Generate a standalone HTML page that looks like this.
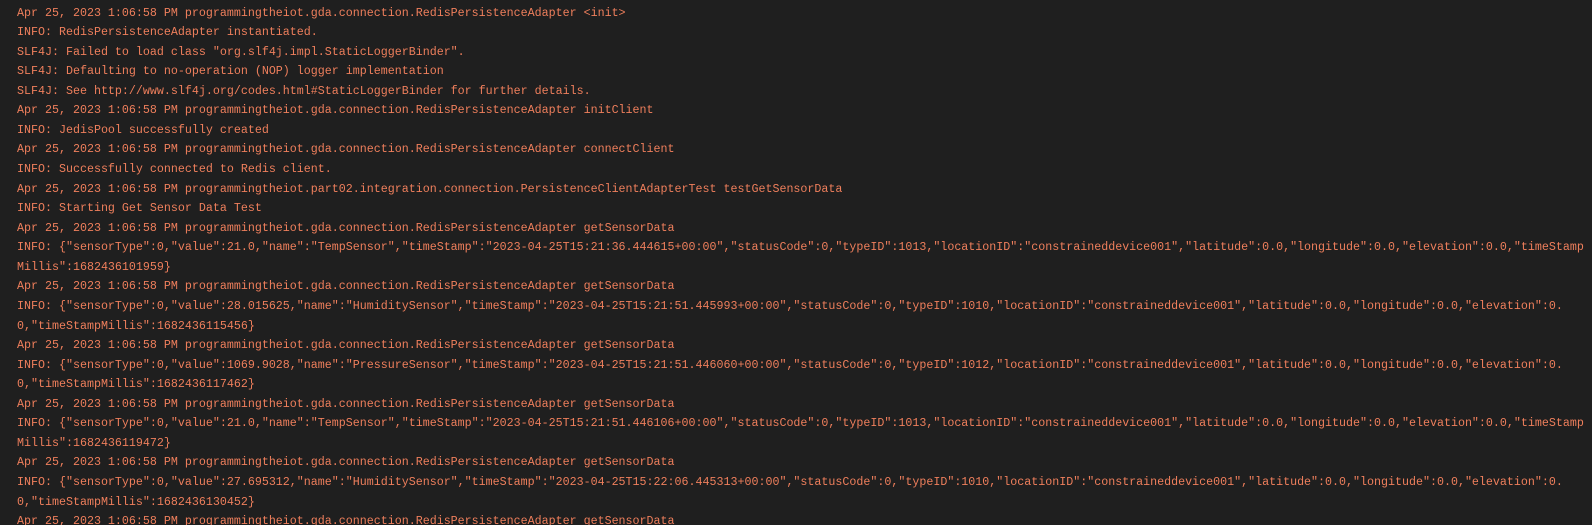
<!DOCTYPE html>
<html><head><meta charset="utf-8"><style>
html,body{margin:0;padding:0;background:#1f1f1f;width:1592px;height:525px;overflow:hidden}
pre{margin:0;padding:3.5px 0 0 17px;font-family:"Liberation Mono","DejaVu Sans Mono",monospace;font-size:11.67px;line-height:19.56px;color:#ef7f5c;white-space:pre}
</style></head><body><pre>Apr 25, 2023 1:06:58 PM programmingtheiot.gda.connection.RedisPersistenceAdapter &lt;init&gt;
INFO: RedisPersistenceAdapter instantiated.
SLF4J: Failed to load class "org.slf4j.impl.StaticLoggerBinder".
SLF4J: Defaulting to no-operation (NOP) logger implementation
SLF4J: See http://www.slf4j.org/codes.html#StaticLoggerBinder for further details.
Apr 25, 2023 1:06:58 PM programmingtheiot.gda.connection.RedisPersistenceAdapter initClient
INFO: JedisPool successfully created
Apr 25, 2023 1:06:58 PM programmingtheiot.gda.connection.RedisPersistenceAdapter connectClient
INFO: Successfully connected to Redis client.
Apr 25, 2023 1:06:58 PM programmingtheiot.part02.integration.connection.PersistenceClientAdapterTest testGetSensorData
INFO: Starting Get Sensor Data Test
Apr 25, 2023 1:06:58 PM programmingtheiot.gda.connection.RedisPersistenceAdapter getSensorData
INFO: {"sensorType":0,"value":21.0,"name":"TempSensor","timeStamp":"2023-04-25T15:21:36.444615+00:00","statusCode":0,"typeID":1013,"locationID":"constraineddevice001","latitude":0.0,"longitude":0.0,"elevation":0.0,"timeStamp
Millis":1682436101959}
Apr 25, 2023 1:06:58 PM programmingtheiot.gda.connection.RedisPersistenceAdapter getSensorData
INFO: {"sensorType":0,"value":28.015625,"name":"HumiditySensor","timeStamp":"2023-04-25T15:21:51.445993+00:00","statusCode":0,"typeID":1010,"locationID":"constraineddevice001","latitude":0.0,"longitude":0.0,"elevation":0.
0,"timeStampMillis":1682436115456}
Apr 25, 2023 1:06:58 PM programmingtheiot.gda.connection.RedisPersistenceAdapter getSensorData
INFO: {"sensorType":0,"value":1069.9028,"name":"PressureSensor","timeStamp":"2023-04-25T15:21:51.446060+00:00","statusCode":0,"typeID":1012,"locationID":"constraineddevice001","latitude":0.0,"longitude":0.0,"elevation":0.
0,"timeStampMillis":1682436117462}
Apr 25, 2023 1:06:58 PM programmingtheiot.gda.connection.RedisPersistenceAdapter getSensorData
INFO: {"sensorType":0,"value":21.0,"name":"TempSensor","timeStamp":"2023-04-25T15:21:51.446106+00:00","statusCode":0,"typeID":1013,"locationID":"constraineddevice001","latitude":0.0,"longitude":0.0,"elevation":0.0,"timeStamp
Millis":1682436119472}
Apr 25, 2023 1:06:58 PM programmingtheiot.gda.connection.RedisPersistenceAdapter getSensorData
INFO: {"sensorType":0,"value":27.695312,"name":"HumiditySensor","timeStamp":"2023-04-25T15:22:06.445313+00:00","statusCode":0,"typeID":1010,"locationID":"constraineddevice001","latitude":0.0,"longitude":0.0,"elevation":0.
0,"timeStampMillis":1682436130452}
Apr 25, 2023 1:06:58 PM programmingtheiot.gda.connection.RedisPersistenceAdapter getSensorData</pre></body></html>
